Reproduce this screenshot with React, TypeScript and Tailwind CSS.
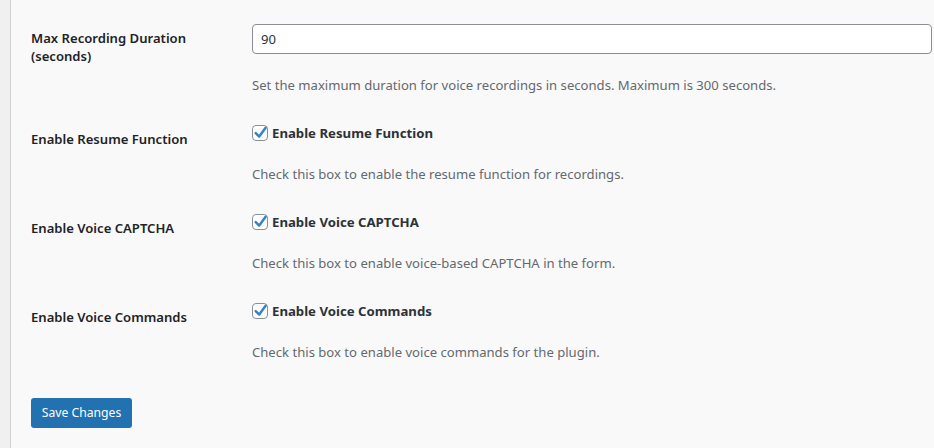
const font = "font-['Noto_Sans',sans-serif]";

const Checkbox = () => (
  <span className="relative inline-flex h-4 w-4 shrink-0 items-center justify-center rounded-[4px] border border-[#8c8f94] bg-white">
    <svg viewBox="0 0 16 16" className="absolute -left-[1px] -top-[2px] h-[17px] w-[17px]">
      <path d="M3.5 8.5 L6.8 11.8 L12.8 3.6" fill="none" stroke="#3582c4" strokeWidth="2.3" strokeLinecap="round" strokeLinejoin="round" />
    </svg>
  </span>
);

interface RowProps {
  label: React.ReactNode;
  children: React.ReactNode;
  description: string;
}

const Row = ({ label, children, description }: RowProps) => (
  <div className="flex">
    <div className="w-[221px] shrink-0 pt-[20px] pr-[10px] text-[13.1px] leading-[18px] font-semibold text-[#1d2327]">
      {label}
    </div>
    <div className="flex-1 pt-[15px] pb-[15px]">
      {children}
      <p className="text-[13.1px] leading-[20px] text-[#646970]">{description}</p>
    </div>
  </div>
);

const CheckRow = ({ label, description }: { label: string; description: string }) => (
  <Row label={label} description={description}>
    <label className="mb-[23px] flex h-4 items-center gap-[4px] text-[13.2px] font-bold text-[#2c3338]">
      <Checkbox />
      <span className="translate-y-[1px]">{label}</span>
    </label>
  </Row>
);

export default function App() {
  return (
    <div className={`flex min-h-[448px] bg-[#f0f0f1] ${font}`}>
      <div className="w-[10px] shrink-0" />
      <div className="flex-1 border-l border-[#d0d1d4] bg-[#f9f9f9] pl-[20px] pr-[2px] pt-[9px]">
        <Row
          label={
            <>
              Max Recording Duration
              <br />
              (seconds)
            </>
          }
          description="Set the maximum duration for voice recordings in seconds. Maximum is 300 seconds."
        >
          <input
            type="text"
            defaultValue="90"
            className="mb-[21px] block h-[30px] w-full rounded-[4px] border border-[#8c8f94] bg-white px-[8px] text-[13.1px] text-[#2c3338] outline-none"
          />
        </Row>
        <CheckRow
          label="Enable Resume Function"
          description="Check this box to enable the resume function for recordings."
        />
        <CheckRow
          label="Enable Voice CAPTCHA"
          description="Check this box to enable voice-based CAPTCHA in the form."
        />
        <CheckRow
          label="Enable Voice Commands"
          description="Check this box to enable voice commands for the plugin."
        />
        <div className="pt-[21px]">
          <button className="h-[30px] w-[101px] rounded-[3px] bg-[#2271b1] text-[12.2px] text-white">
            Save Changes
          </button>
        </div>
      </div>
    </div>
  );
}
